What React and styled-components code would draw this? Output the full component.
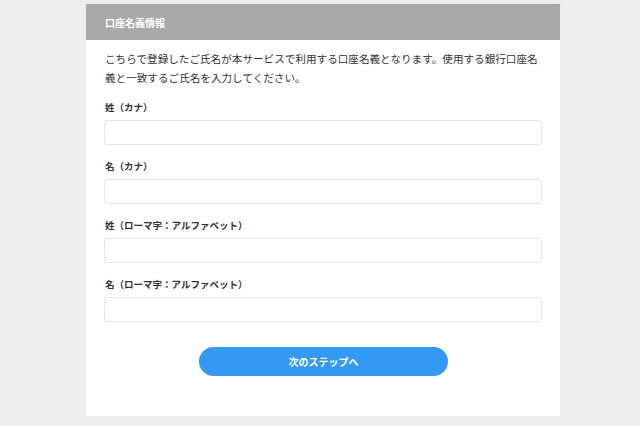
import styled, { createGlobalStyle } from "styled-components";

const Global = createGlobalStyle`
  html, body {
    margin: 0;
    padding: 0;
    background: #eeeeef;
    font-family: "Noto Sans CJK JP", "Noto Sans", sans-serif;
  }
`

const Page = styled.div`
  width: 640px;
  height: 426px;
  padding-top: 4px;
  box-sizing: border-box;
  overflow: hidden;
`

const Card = styled.div`
  width: 474px;
  margin-left: 86px;
  background: #fff;
  padding-bottom: 40px;
  box-shadow: 0 0 2px rgba(0, 0, 0, 0.04);
`

const Header = styled.div`
  height: 36px;
  background: #a9a9a9;
  color: #fff;
  font-size: 10px;
  font-weight: 700;
  display: flex;
  align-items: center;
  padding-left: 19px;
`

const Body = styled.div`
  padding: 9px 18px 0 19px;
`

const Lead = styled.p`
  margin: 0 0 13px;
  font-size: 10.6px;
  line-height: 19px;
  color: #333;
`

const Field = styled.div`
  margin-bottom: 14px;
`

const Label = styled.div`
  font-size: 9.5px;
  font-weight: 700;
  line-height: 14px;
  color: #333;
  margin-bottom: 6px;
`

const Input = styled.input`
  display: block;
  box-sizing: border-box;
  width: 438px;
  height: 25px;
  margin-left: -1px;
  border: 1px solid #e4e4e4;
  border-radius: 3px;
  background: #fff;
  outline: none;
`

const Actions = styled.div`
  display: flex;
  justify-content: center;
  padding-top: 11px;
`

const NextButton = styled.button`
  width: 249px;
  height: 29px;
  border: none;
  border-radius: 15px;
  background: #3399f3;
  color: #fff;
  font-family: inherit;
  font-size: 10px;
  font-weight: 700;
  cursor: pointer;
`

const fields = [
  "姓（カナ）",
  "名（カナ）",
  "姓（ローマ字：アルファベット）",
  "名（ローマ字：アルファベット）",
];

export default function App() {
  return (
    <Page>
      <Global />
      <Card>
        <Header>口座名義情報</Header>
        <Body>
          <Lead>
            こちらで登録したご氏名が本サービスで利用する口座名義となります。使用する銀行口座名義と一致するご氏名を入力してください。
          </Lead>
          {fields.map((f) => (
            <Field key={f}>
              <Label>{f}</Label>
              <Input type="text" />
            </Field>
          ))}
          <Actions>
            <NextButton>次のステップへ</NextButton>
          </Actions>
        </Body>
      </Card>
    </Page>
  );
}
